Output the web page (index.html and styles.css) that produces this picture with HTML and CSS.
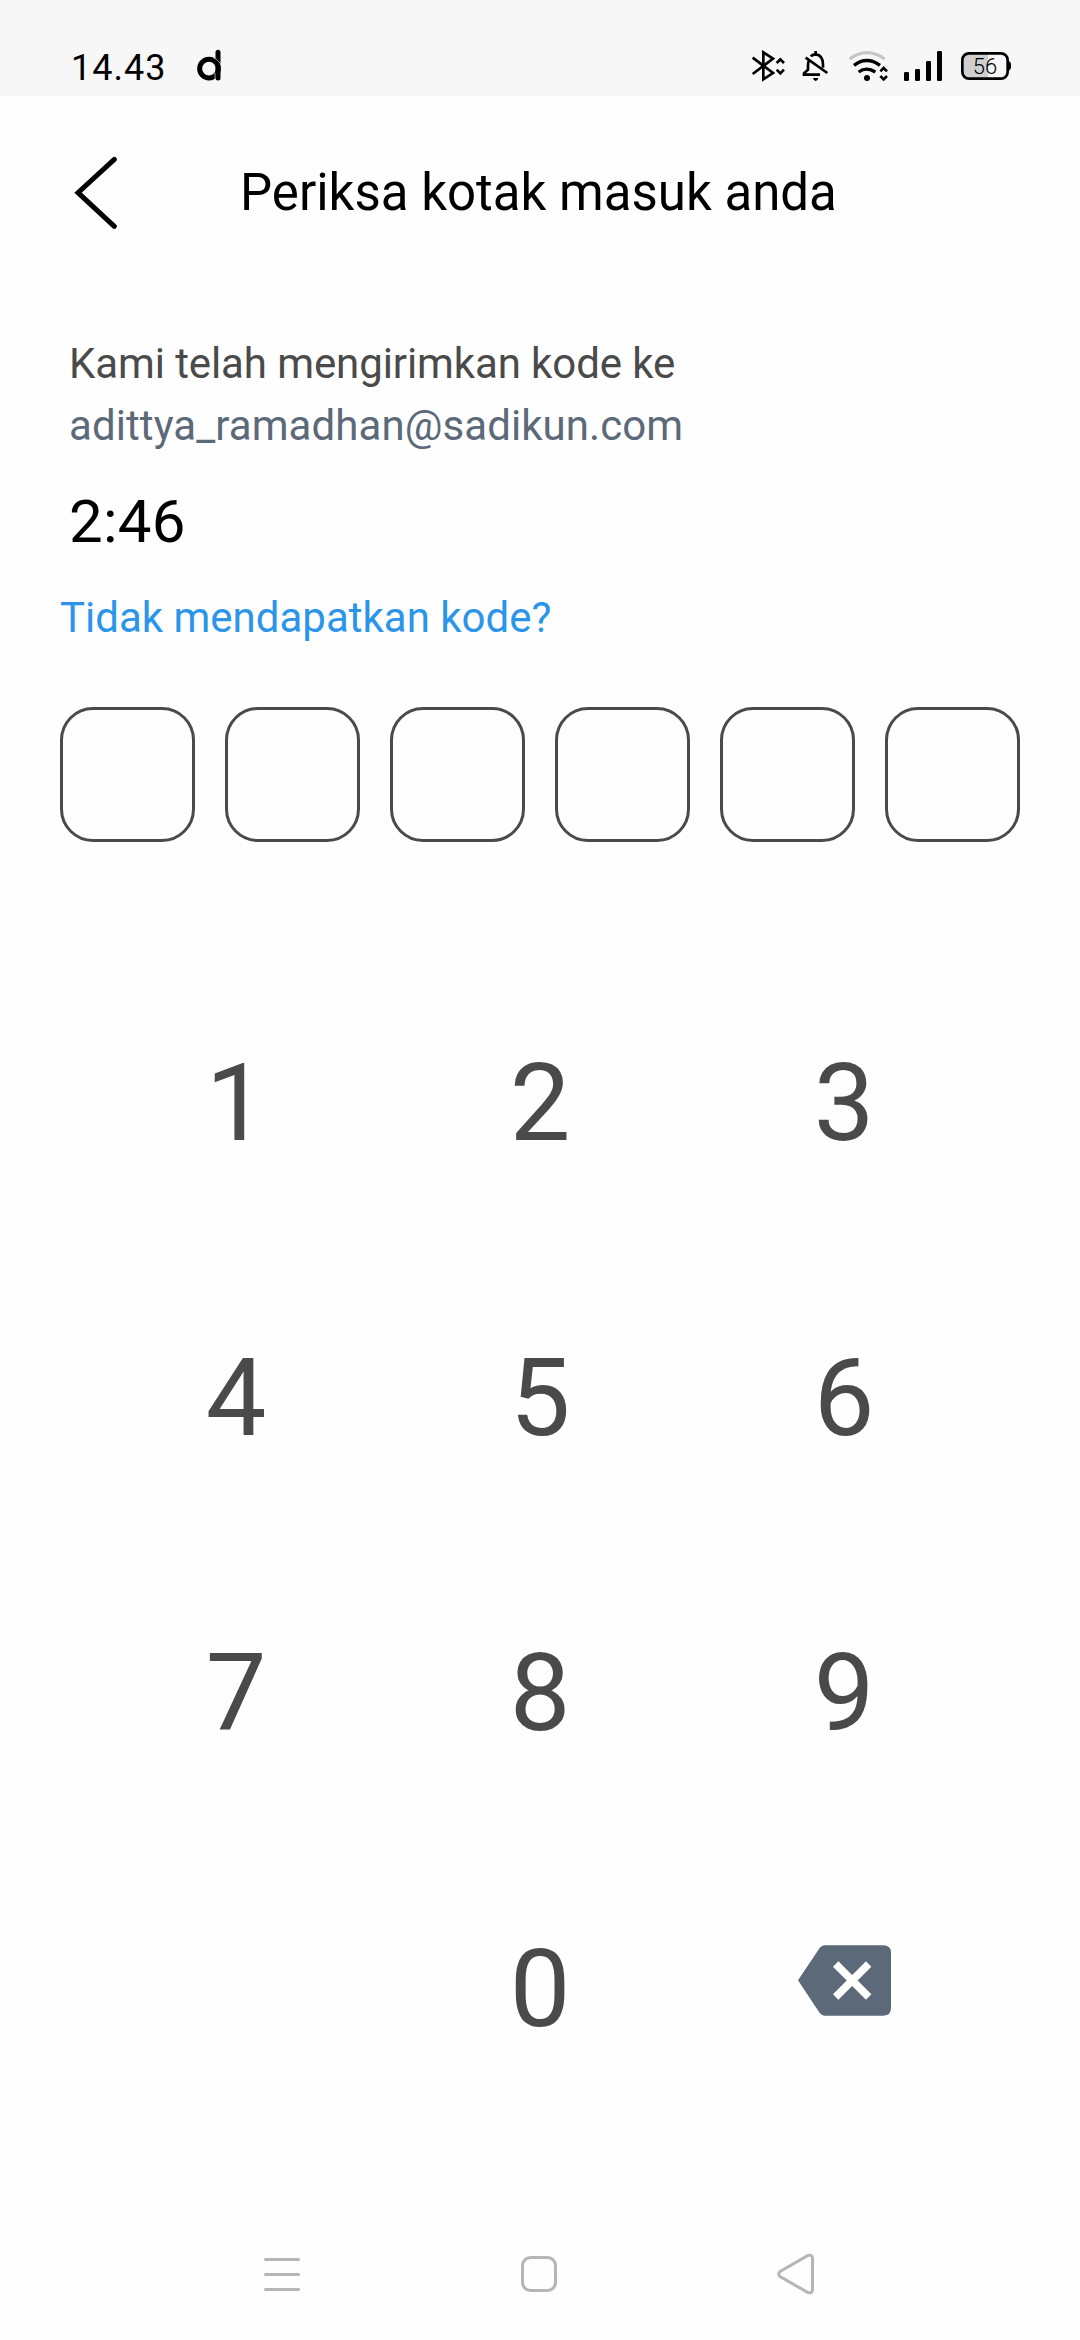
FILE: index.html
```html
<!doctype html>
<html lang="id">
<head>
  <meta charset="utf-8">
  <title>Periksa kotak masuk anda</title>
  <link rel="stylesheet" href="styles.css">
</head>

<body>
  <div class="statusBar">
    <span class="time">14.43</span>
    <svg class="appIcon" width="28" height="34" viewBox="438 57 84 102" fill="none" stroke="#000">
      <circle cx="477" cy="116" r="28" stroke-width="15"/>
      <path d="M504 67V144" stroke-width="15" stroke-linecap="round"/>
      <path d="M490 83Q508 91 513 106M495 128V152" stroke="#f7f7f7" stroke-width="2"/>
    </svg>
    <div class="statusIcons">
      <!-- bluetooth -->
      <svg width="36" height="32" viewBox="33 60 108 96" fill="none" stroke="#000" stroke-width="8">
        <path d="M38 83L99 129L70 148V67L99 86L38 132"/>
        <path d="M110 99L121 88L132 99M110 119L121 130L132 119"/>
      </svg>
      <!-- bell off -->
      <svg class="bell" width="28" height="32" viewBox="186 60 84 96" fill="none" stroke="#000" stroke-width="8">
        <path d="M207 92Q204 97 204 106V119L192 130V134H240"/>
        <path d="M212 79Q219 73 227 73Q249 75 249 104V113"/>
        <path d="M227 63V74M197 83L262 129"/>
        <path d="M219 144H235Q233 153 227 153Q221 153 219 144Z" fill="#000" stroke="none"/>
      </svg>
      <!-- wifi -->
      <svg class="wifi" width="41" height="32" viewBox="324 60 123 96" fill="none" stroke="#000" stroke-width="10">
        <path d="M329 87Q380 49 434 87" stroke="#c6c6c6"/>
        <path d="M342 106Q380 77 420 106"/>
        <path d="M356 126Q380 109 406 126"/>
        <circle cx="381" cy="144" r="9" fill="#000" stroke="none"/>
        <path d="M421 124L431 114L441 124M421 138L431 148L441 138" stroke-width="8"/>
      </svg>
      <!-- signal -->
      <svg class="signal" width="40" height="32" viewBox="489 60 120 96">
        <rect x="492" y="126" width="15" height="27" rx="4"/>
        <rect x="525" y="117" width="15" height="36" rx="4"/>
        <rect x="558" y="93" width="15" height="60" rx="4"/>
        <rect x="591" y="63" width="15" height="90" rx="4"/>
      </svg>
      <div class="battery">
        <svg width="52" height="32" viewBox="660 60 156 96">
          <path d="M744 70H687Q667 70 667 90V126Q667 146 687 146H744Z" fill="#cfcfcf"/>
          <rect x="667" y="70" width="136" height="76" rx="20" fill="none" stroke="#000" stroke-width="8"/>
          <path d="M806 93Q813 96 813 103V112Q813 119 806 122Z"/>
        </svg>
        <span class="level">56</span>
      </div>
    </div>
  </div>

  <div class="header">
    <svg width="44" height="74" viewBox="72 72 132 222" fill="none" stroke="#000" stroke-width="15" stroke-linecap="round">
      <path d="M193 85L84 185L193 286"/>
    </svg>
    <h1>Periksa kotak masuk anda</h1>
  </div>

  <div class="message">
    <p class="info">Kami telah mengirimkan kode ke</p>
    <p class="email">adittya_ramadhan@sadikun.com</p>
    <p class="timer">2:46</p>
  </div>
  <a class="resend">Tidak mendapatkan kode?</a>

  <div class="codeBoxes">
    <div class="box"></div>
    <div class="box"></div>
    <div class="box"></div>
    <div class="box"></div>
    <div class="box"></div>
    <div class="box"></div>
  </div>

  <div class="keypad">
    <button>1</button>
    <button>2</button>
    <button>3</button>
    <button>4</button>
    <button>5</button>
    <button>6</button>
    <button>7</button>
    <button>8</button>
    <button>9</button>
    <span></span>
    <button>0</button>
    <button class="delete">
      <svg width="97" height="73" viewBox="945 132 291 219">
        <path d="M951 241L1014 147Q1021 136 1033 136H1207Q1230 136 1230 159V325Q1230 347 1207 347H1033Q1021 347 1014 336Z" fill="#5b6978"/>
        <path d="M1064 192L1163 291M1163 192L1064 291" stroke="#fff" stroke-width="23"/>
      </svg>
    </button>
  </div>

  <div class="navBar">
    <svg width="36" height="42" viewBox="0 0 36 42" stroke="#b5b5b5" stroke-width="3" stroke-linecap="round">
      <path d="M1.5 6.5H34.5M1.5 21.5H34.5M1.5 36.5H34.5"/>
    </svg>
    <svg width="36" height="42" viewBox="0 0 36 42" fill="none" stroke="#b5b5b5" stroke-width="3">
      <rect x="1.5" y="4.5" width="33" height="33" rx="8"/>
    </svg>
    <svg width="38" height="42" viewBox="0 0 38 42" fill="none" stroke="#b5b5b5" stroke-width="3">
      <path d="M3 18.5L30.500 2.700Q35.500 1 35.500 5.500V36.500Q35.500 41 30.500 39.300L3 23.500Q0.500 21 3 18.500Z"/>
    </svg>
  </div>
</body>

</html>
```

FILE: styles.css
```css
body{
  margin: 0;
  height: 2340px;
  background: #fefefe;
  font-family: Roboto, sans-serif;
  color: #000;
  display: flex;
  flex-direction: column;
}
p, h1{
  margin: 0;
  font-weight: normal;
}
svg{
  display: block;
  flex: none;
}

/* status bar */
.statusBar{
  height: 96px;
  box-sizing: border-box;
  padding: 49px 68px 0 71px;
  background: #f7f7f7;
  display: flex;
  align-items: flex-start;
}
.time{
  width: 125px;
  font-size: 36px;
  line-height: 38px;
  letter-spacing: 1px;
}
.statusIcons{
  display: flex;
  margin-left: auto;
  padding-top: 1px;
}
.bell{
  margin-left: 15px;
}
.wifi{
  margin-left: 18px;
}
.signal{
  margin-left: 14px;
}
.battery{
  position: relative;
  margin-left: 17px;
}
.level{
  position: absolute;
  top: 0;
  left: 0;
  width: 50px;
  font-size: 22px;
  font-weight: 300;
  line-height: 33px;
  text-align: center;
}

.header{
  height: 192px;
  padding-left: 74px;
  display: flex;
  align-items: center;
  gap: 122px;
}
.header h1{
  padding-top: 2px;
  font-size: 51px;
  line-height: 62px;
}

/* message */
.message{
  margin: 45px 0 0 69px;
  font-size: 42px;
  line-height: 62px;
  color: #4a4a4a;
}
.info{
  letter-spacing: -0.1px;
}
.email{
  color: #5b6978;
  letter-spacing: 0.08px;
}
.timer{
  margin-top: 30px;
  font-size: 60px;
  line-height: 70px;
  letter-spacing: 0.3px;
  color: #000;
}
.resend{
  margin: 30px 0 0 60px;
  font-size: 42px;
  line-height: 62px;
  color: #2b95e9;
}

.codeBoxes{
  display: flex;
  gap: 30px;
  margin: 58px 60px 0;
}
.box{
  width: 135px;
  height: 135px;
  box-sizing: border-box;
  border: 3px solid #4a4a4a;
  border-radius: 33px;
}

/* keypad */
.keypad{
  display: grid;
  grid-template-columns: repeat(3, 304px);
  grid-template-rows: repeat(4, 295.4px);
  margin: 113px 84px 0;
}
.keypad button{
  border: none;
  padding: 0;
  background: none;
  font-family: inherit;
  font-size: 108px;
  color: #4a4a4a;
  display: flex;
  align-items: center;
  justify-content: center;
}
.keypad .delete{
  padding-bottom: 17px;
}

.navBar{
  display: flex;
  justify-content: space-between;
  margin: auto 265px 45px 264px;
}
```
